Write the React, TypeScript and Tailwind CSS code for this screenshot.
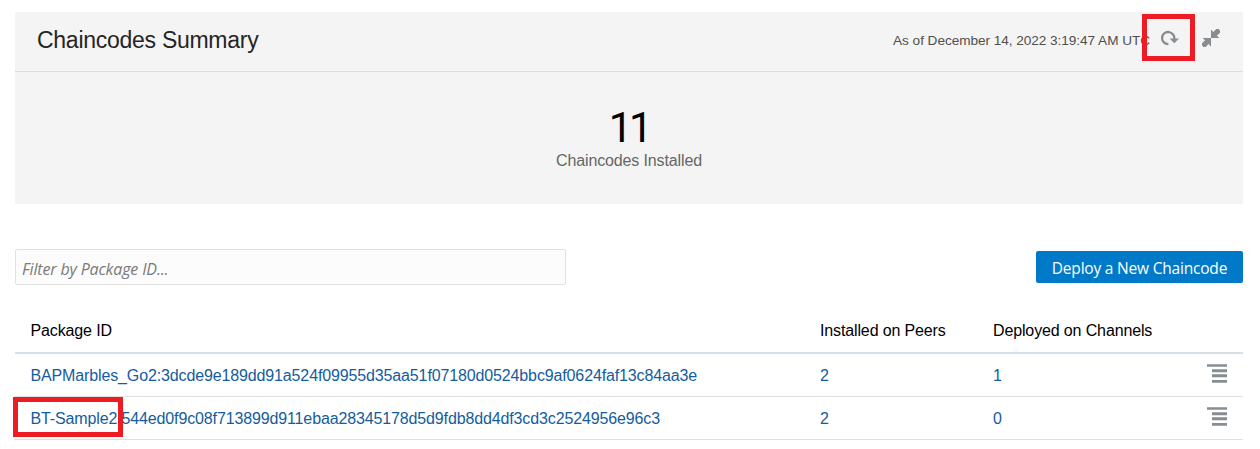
type Chaincode = { id: string; peers: number; channels: number; marked?: boolean };

const chaincodes: Chaincode[] = [
  { id: 'BAPMarbles_Go2:3dcde9e189dd91a524f09955d35aa51f07180d0524bbc9af0624faf13c84aa3e', peers: 2, channels: 1 },
  { id: 'BT-Sample2:544ed0f9c08f713899d911ebaa28345178d5d9fdb8dd4df3cd3c2524956e96c3', peers: 2, channels: 0, marked: true },
];

function RefreshIcon() {
  return (
    <svg width="18" height="16" viewBox="0 0 18 16" fill="none" className="block">
      <path d="M7.4 14.2A6.1 6.1 0 1 1 13.2 9.2" stroke="#878d91" strokeWidth="2.3" />
      <path d="M8.6 8.5H18L13.3 13.2Z" fill="#878d91" />
    </svg>
  );
}

function CollapseIcon() {
  return (
    <svg width="18" height="18" viewBox="0 0 18 18" fill="#878d91" className="block">
      <path d="M9 0.6V9H17.4L14.9 6.7L18 3.7V1.5L16.5 0H14.3L11.4 3Z" />
      <path d="M9 17.4V9H0.6L3.1 11.3L0 14.3V16.5L1.5 18H3.7L6.6 15Z" />
    </svg>
  );
}

function MenuIcon() {
  return (
    <svg width="20" height="20" viewBox="0 0 20 20" fill="#878d91" className="block">
      <path d="M0 0.2H20V2.8H0ZM5 5.3H20V8.2H5ZM5 10.3H20V13.2H5ZM5 16H20V18.8H5Z" />
    </svg>
  );
}

export default function App() {
  return (
    <div className="h-[449px] w-[1260px] bg-white pt-3 pr-[17px] pl-[15px] font-['Liberation_Sans',Arial,sans-serif] text-base tracking-[-0.133px] text-black">
      <section className="h-48 rounded-t-[2px] bg-[#f4f4f4]">
        <header className="flex h-[60px] items-center border-b border-[#d6dfe6] px-[22px]">
          <h1 className="mt-[-2px] flex-1 text-[23px] tracking-[-0.27px] text-[#252525]">Chaincodes Summary</h1>
          <span className="mt-[-1px] text-[13.6px] leading-[20px] tracking-[-0.04px] whitespace-nowrap text-[#4f4f4f]">As of December 14, 2022 3:19:47 AM UTC</span>
          <button className="relative mt-[-7px] ml-[11px] h-4 w-[18px]">
            <RefreshIcon />
            <span className="absolute -top-[16px] -left-[19px] h-[47px] w-[53px] border-5 border-[#ed1c24]" />
          </button>
          <button className="mt-[-7px] mr-[1px] ml-[23px] h-[18px] w-[18px]"><CollapseIcon /></button>
        </header>
        <div className="flex flex-col items-center pt-[33px]">
          <span className="h-[44px] font-[Roboto,sans-serif] text-[42px] leading-[46px] tracking-[-3.4px]">11</span>
          <span className="leading-[24px] text-[#666]">Chaincodes Installed</span>
        </div>
      </section>

      <div className="mt-[45px] flex items-start justify-between">
        <input
          placeholder="Filter by Package ID..."
          className="h-9 w-[551px] rounded-[2px] border border-[#e1e1e1] bg-[#fcfcfc] px-1.5 pt-[3px] font-['Open_Sans',sans-serif] text-base tracking-[-0.15px] italic placeholder:text-[#7a7a7a]"
        />
        <button className="mt-0.5 h-8 w-[207px] rounded-[2px] bg-[#007ac8] pt-[3px] font-['Open_Sans',sans-serif] text-[15.5px] tracking-[-0.2px] whitespace-nowrap text-white">
          Deploy a New Chaincode
        </button>
      </div>

      <table className="mt-[23px] w-full table-fixed border-collapse text-left">
        <colgroup>
          <col className="w-[789px]" />
          <col className="w-[173px]" />
          <col className="w-[214px]" />
          <col />
        </colgroup>
        <thead>
          <tr className="h-[45px] border-b-2 border-[#d6dfe6]">
            <th className="pt-0.5 pl-[15.5px] font-normal">Package ID</th>
            <th className="pt-0.5 pl-4 font-normal">Installed on Peers</th>
            <th className="pt-0.5 pl-4 font-normal">Deployed on Channels</th>
            <th />
          </tr>
        </thead>
        <tbody className="text-[#145c9e]">
          {chaincodes.map((c) => (
            <tr key={c.id} className="h-[43px] border-b border-[#dfdfdf]">
              <td className="relative pt-0.5 pl-[15.5px] whitespace-nowrap">
                <a>{c.id}</a>
                {c.marked && <span className="absolute top-0 -left-[2px] h-10 w-[110px] border-5 border-[#ed1c24]" />}
              </td>
              <td className="pt-0.5 pl-4">{c.peers}</td>
              <td className="pt-0.5 pl-4">{c.channels}</td>
              <td><button className="mt-[-1px] ml-4 block"><MenuIcon /></button></td>
            </tr>
          ))}
        </tbody>
      </table>
    </div>
  );
}
